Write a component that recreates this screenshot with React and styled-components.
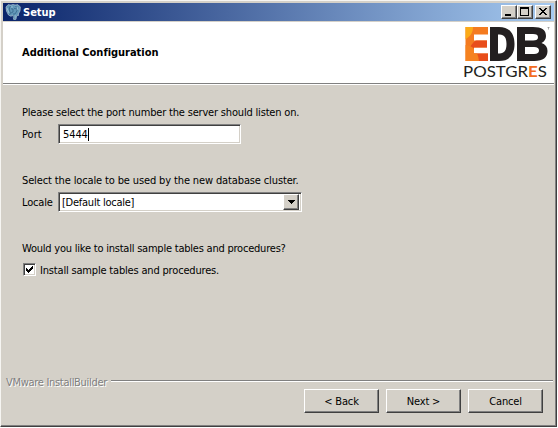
import React from "react";
import styled, { createGlobalStyle } from "styled-components";

const GlobalStyle = createGlobalStyle`
  * { box-sizing: border-box; }
  body { margin: 0; background: #fff; overflow: hidden; }
`;

const Window = styled.main`
  width: 557px;
  height: 427px;
  display: flex;
  flex-direction: column;
  background: #d4d0c8;
  border: 1px solid;
  border-color: #f6f5f2 #404040 #404040 #f6f5f2;
  box-shadow: inset -1px -1px #808080;
  padding: 2px;
  font-family: "DejaVu Sans Condensed", "DejaVu Sans", sans-serif;
  font-stretch: condensed;
  font-size: 11px;
  color: #000;
`;

const TitleBar = styled.header`
  flex: none;
  height: 18px;
  display: flex;
  align-items: center;
  gap: 2px;
  padding: 0 3px 0 2px;
  background: linear-gradient(90deg, #0a246a, #a6caf0);
`;

const Label = styled.span`
  display: block;
  padding-top: 1px;
  line-height: 14px;
  white-space: nowrap;
  letter-spacing: ${(p) => p.$track ?? -0.18}px;
  font-weight: ${(p) => (p.$bold ? 700 : 400)};
  color: ${(p) => p.$color || "#000"};
`;

const WindowButtons = styled.div`
  display: flex;
  margin-left: auto;
`;

const raised = `
  background: #d4d0c8;
  border: 1px solid;
  border-color: #fff #404040 #404040 #fff;
  box-shadow: inset -1px -1px #808080;
`;

const WindowButton = styled.button`
  ${raised}
  width: 16px;
  height: 14px;
  padding: 0;
  margin-left: ${(p) => p.$gap || 0}px;
  svg { display: block; }
`;

const Banner = styled.section`
  flex: none;
  height: 62px;
  margin-top: 1px;
  display: flex;
  justify-content: space-between;
  background: #fff;
  border-bottom: 1px solid #808080;
  box-shadow: 0 1px #fff;
  padding: 23px 4px 0 19px;
`;

const Logo = styled.svg`
  display: block;
  margin-top: -20px;
`;

const Content = styled.section`
  flex: 1;
  padding: 21px 19px 0;
`;

const Field = styled.div`
  height: ${(p) => p.$height}px;
`;

const Row = styled.div`
  display: flex;
  align-items: center;
  height: 20px;
  margin-top: 4px;
`;

const Caption = styled.label`
  width: 36px;
`;

const sunken = `
  background: #fff;
  border: 1px solid;
  border-color: #808080 #fff #fff #808080;
  box-shadow: inset 1px 1px #404040, inset -1px -1px #d4d0c8;
`;

const TextBox = styled.div`
  ${sunken}
  display: flex;
  align-items: center;
  width: 183px;
  height: 20px;
  padding-left: 4px;
`;

const Caret = styled.i`
  width: 1px;
  height: 13px;
  background: #000;
`;

const SelectBox = styled.div`
  ${sunken}
  display: flex;
  align-items: center;
  justify-content: space-between;
  width: 244px;
  height: 20px;
  padding: 2px 2px 2px 3px;
`;

const DropButton = styled.button`
  ${raised}
  display: flex;
  align-items: center;
  width: 16px;
  height: 16px;
  padding: 0 0 0 4px;
`;

const CheckBox = styled.div`
  ${sunken}
  width: 13px;
  height: 13px;
  margin: 0 4px 1px 1px;
  svg { display: block; margin: 2px; }
`;

const BrandLine = styled.div`
  flex: none;
  display: flex;
  align-items: center;
  gap: 4px;
  height: 14px;
  padding: 0 1px 0 3px;
  text-shadow: 1px 1px #fff;
`;

const Rule = styled.div`
  flex: 1;
  height: 2px;
  margin-bottom: 2px;
  background: #808080;
  border-bottom: 1px solid #fff;
`;

const Actions = styled.footer`
  flex: none;
  display: flex;
  justify-content: flex-end;
  gap: 7px;
  height: 35px;
  padding-right: 11px;
`;

const ActionButton = styled.button`
  ${raised}
  display: flex;
  align-items: center;
  justify-content: center;
  width: 75px;
  height: 24px;
  padding: 0;
  font: inherit;
`;

function Elephant() {
  return (
    <svg width="16" height="16" viewBox="0 0 16 16">
      <path d="M1 3 3 .7 6 1.1 8 .5 10 1 13 .7 15.3 3 15 7 13 10.5 14 11 11.5 12 11 15.3 8.7 15.5 8 11 6 12.3 3.5 11 1.5 7Z" fill="#6297b8" stroke="#b0c4d2" strokeWidth=".7" />
      <path d="M5.5 2C3.7 4 4.5 7 5.5 9L4.5 11M6 4.8l2 .2v3L6 9M10.5 2c2 2 2 4 .8 6L10 10M9 4.5l2 .2M9 9v5" fill="none" stroke="#315f83" strokeWidth=".7" />
      <path d="M2 4l2 5M7 2v2M12 3l1 3M10 11v3" stroke="#a6cadd" strokeWidth=".8" />
    </svg>
  );
}

const LogoText = styled.text`
  font-family: Lato, sans-serif;
  font-size: 16px;
`;

function EdbLogo() {
  return (
    <Logo width="90" height="58" viewBox="460 25 90 58">
      <defs>
        <clipPath id="letterE"><path d="M465.500 27H488v7.500h-14v6h13v7h-13v6h14V61h-22.500z" /></clipPath>
      </defs>
      <g clipPath="url(#letterE)">
        <path d="M464 27h25v34h-25z" fill="#f47b20" />
        <path d="M464 27h9c0 6-3 10-9 13z" fill="#fbab18" />
        <circle cx="484" cy="53" r="15" fill="#e84e1b" />
        <path d="M464 45q13 0 15 16h-15z" fill="#f58220" />
      </g>
      <path d="M490 27h9c10 0 15.500 6 15.500 17S509 61 499 61h-9zm8 7.500v19h1.500c5 0 7-3.500 7-9.500s-2-9.500-7-9.500z" fill="#231f20" fillRule="evenodd" />
      <path d="M517 27h16c9 0 13 3 13 9 0 3-1.500 5.500-4.500 7 4 1.200 6 4 6 8 0 6.500-4.500 10-13 10H517zm8 7v6.500h8c3.500 0 5-1 5-3.250S536.500 34 533 34zm0 13v7h9c3.500 0 5-1.300 5-3.500s-1.500-3.500-5-3.500z" fill="#231f20" fillRule="evenodd" />
      <LogoText x="463" y="76.500" textLength="84" lengthAdjust="spacingAndGlyphs" fill="#231f20">
        POSTGR<tspan fill="#f36c21" fontWeight="700">E</tspan>S
      </LogoText>
      <path d="M547.500 27.500h2M548.500 27.500v2" stroke="#777" strokeWidth=".6" />
    </Logo>
  );
}

export default function App() {
  return (
    <>
      <GlobalStyle />
      <Window>
        <TitleBar>
          <Elephant />
          <Label $bold $track={0} $color="#fff">Setup</Label>
          <WindowButtons>
            <WindowButton aria-label="Minimize">
              <svg width="14" height="12"><path d="M3 8h6v2H3z" /></svg>
            </WindowButton>
            <WindowButton aria-label="Maximize">
              <svg width="14" height="12"><path d="M2 1h9v9H2zm1 2v6h7V3z" fillRule="evenodd" /></svg>
            </WindowButton>
            <WindowButton aria-label="Close" $gap={2}>
              <svg width="14" height="12" shapeRendering="crispEdges"><path d="M3 2h2v1h1v1h2V3h1V2h2v1h-1v1H9v1H8v1h1v1h1v1h1v1H9V8H8V7H6v1H5v1H3V8h1V7h1V6h1V5H5V4H4V3H3z" /></svg>
            </WindowButton>
          </WindowButtons>
        </TitleBar>
        <Banner>
          <Label $bold $track={-0.03}>Additional Configuration</Label>
          <EdbLogo />
        </Banner>
        <Content>
          <Field $height={68}>
            <Label>Please select the port number the server should listen on.</Label>
            <Row>
              <Caption><Label $track={0}>Port</Label></Caption>
              <TextBox><Label $track={-0.1}>5444</Label><Caret /></TextBox>
            </Row>
          </Field>
          <Field $height={68}>
            <Label $track={-0.13}>Select the locale to be used by the new database cluster.</Label>
            <Row>
              <Caption><Label>Locale</Label></Caption>
              <SelectBox>
                <Label $track={-0.25}>[Default locale]</Label>
                <DropButton aria-label="Open locale list">
                  <svg width="7" height="4" shapeRendering="crispEdges"><path d="M0 0h7v1H6v1H5v1H4v1H3V3H2V2H1V1H0z" /></svg>
                </DropButton>
              </SelectBox>
            </Row>
          </Field>
          <Field $height={50}>
            <Label $track={-0.22}>Would you like to install sample tables and procedures?</Label>
            <Row>
              <CheckBox role="checkbox" aria-checked="true">
                <svg width="7" height="7" shapeRendering="crispEdges"><path d="M0 2h1v1h1v1h1V3h1V2h1V1h1V0h1v3H6v1H5v1H4v1H3v1H2V6H1V5H0z" /></svg>
              </CheckBox>
              <Label $track={-0.18}>Install sample tables and procedures.</Label>
            </Row>
          </Field>
        </Content>
        <BrandLine>
          <Label $track={-0.3} $color="#808080">VMware InstallBuilder</Label>
          <Rule />
        </BrandLine>
        <Actions>
          <ActionButton><Label>&lt; Back</Label></ActionButton>
          <ActionButton><Label>Next &gt;</Label></ActionButton>
          <ActionButton><Label>Cancel</Label></ActionButton>
        </Actions>
      </Window>
    </>
  );
}
